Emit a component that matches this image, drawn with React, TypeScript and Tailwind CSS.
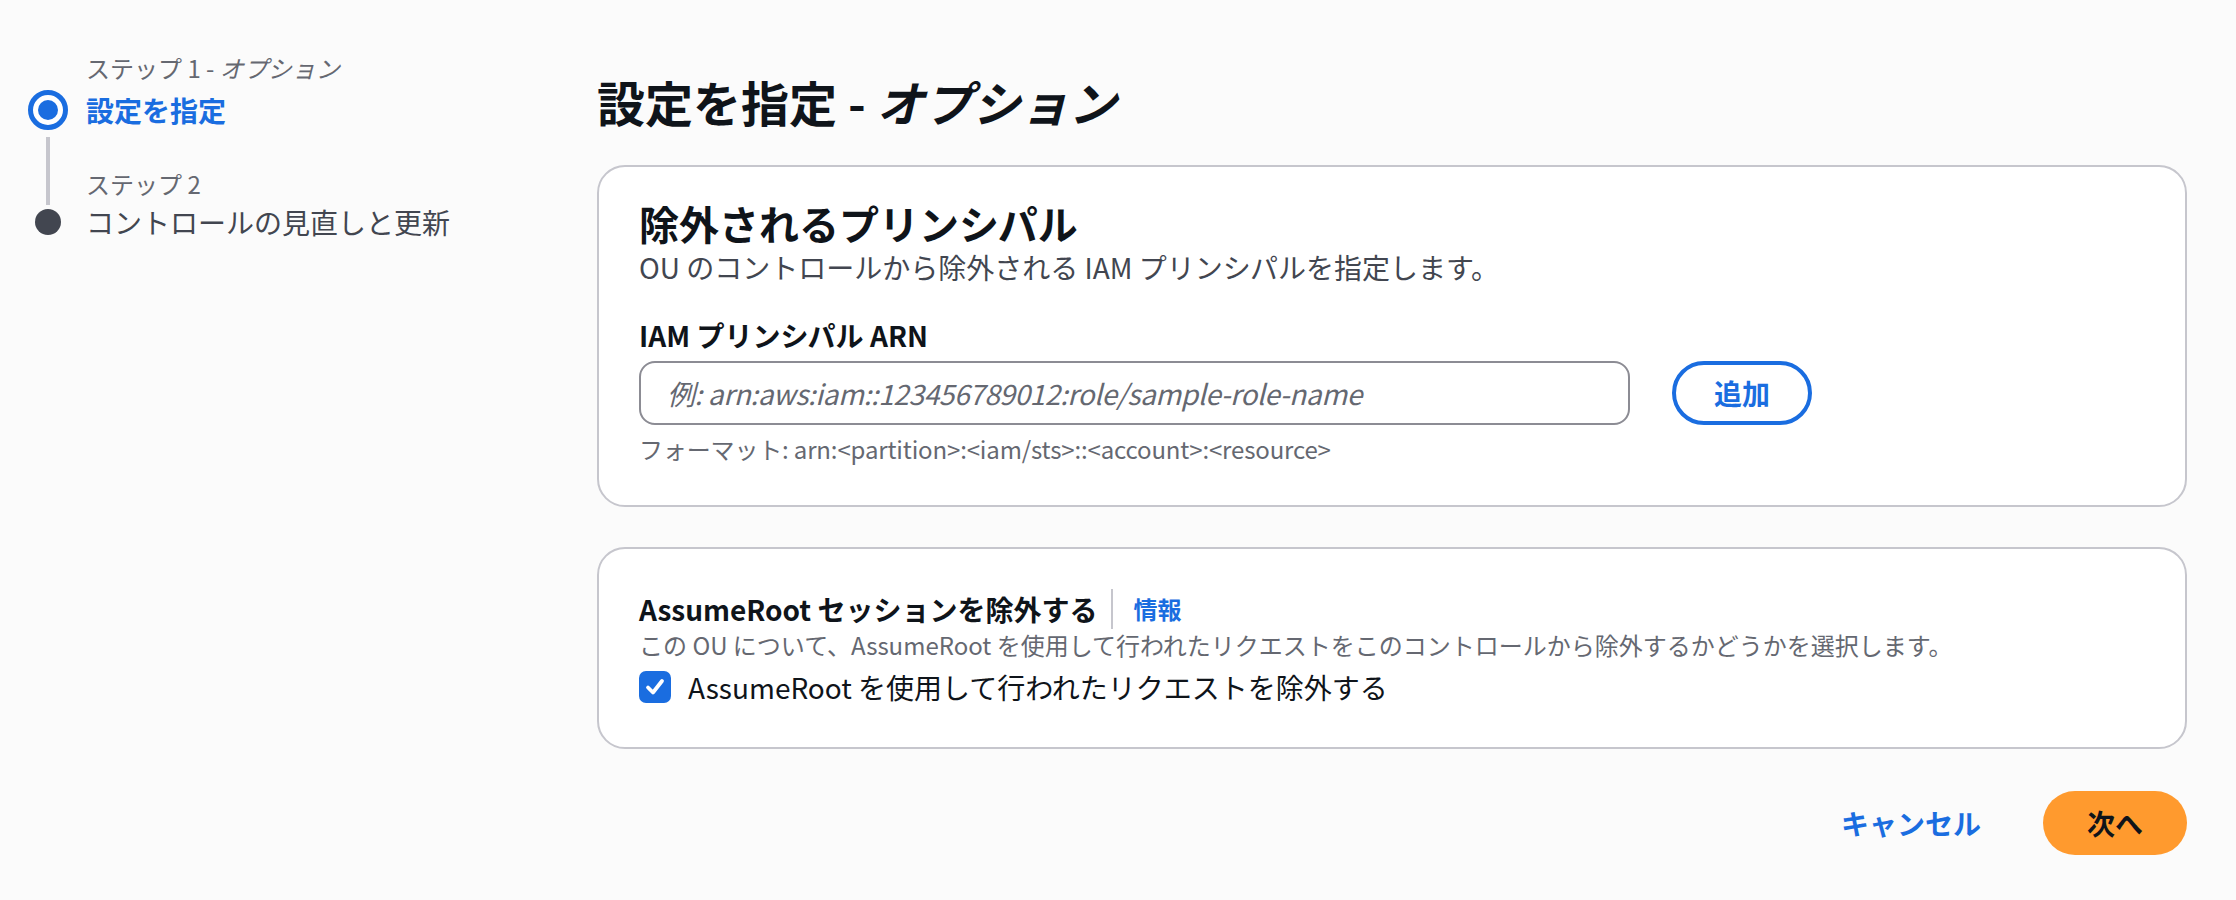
import { useState } from 'react'

const steps = [
  { label: 'ステップ 1 - ', labelItalic: 'オプション', title: '設定を指定' },
  { label: 'ステップ 2', labelItalic: '', title: 'コントロールの見直しと更新' },
]

function StepNav() {
  return (
    <nav className="w-[597px] shrink-0 pl-[28px] pt-[52px]">
      <div className="grid grid-cols-[40px_1fr] gap-x-[18px]">
        <div />
        <div className="text-[24px] leading-8 text-[#656871]">
          {steps[0].label}
          <span className="italic">{steps[0].labelItalic}</span>
        </div>

        <div className="mt-1 flex h-[44px] items-center justify-center">
          <span className="flex h-10 w-10 items-center justify-center rounded-full border-[5px] border-[#1a6de0] bg-white">
            <span className="h-5 w-5 rounded-full bg-[#1a6de0]" />
          </span>
        </div>
        <div className="mt-1 text-[28px] font-bold leading-[44px] text-[#1a6de0]">{steps[0].title}</div>

        <div className="flex justify-center pt-[5px]">
          <span className="h-[calc(100%+5px)] w-1 bg-[#c6c6cd]" />
        </div>
        <div className="pt-[36px] text-[24px] leading-8 text-[#656871]">{steps[1].label}</div>

        <div className="flex h-[44px] items-center justify-center">
          <span className="h-[26px] w-[26px] rounded-full bg-[#424650]" />
        </div>
        <div className="text-[28px] leading-[44px] text-[#424650]">{steps[1].title}</div>
      </div>
    </nav>
  )
}

function Checkbox({ checked, onChange }: { checked: boolean; onChange: () => void }) {
  return (
    <button
      type="button"
      onClick={onChange}
      className={`flex h-8 w-8 shrink-0 items-center justify-center rounded-[7px] ${
        checked ? 'bg-[#1a6de0]' : 'border-2 border-[#8c8c94] bg-white'
      }`}
    >
      {checked && (
        <svg width="22" height="22" viewBox="0 0 22 22" fill="none">
          <path d="M4 11.5 L9 16.5 L18 5" stroke="white" strokeWidth="3.8" strokeLinecap="round" strokeLinejoin="round" />
        </svg>
      )}
    </button>
  )
}

export default function App() {
  const [arn, setArn] = useState('')
  const [excludeRoot, setExcludeRoot] = useState(true)

  return (
    <div className="flex min-h-screen bg-[#fbfbfb] font-['Noto_Sans_CJK_JP',sans-serif] text-[#0f141a]">
      <StepNav />

      <main className="w-[1590px] pt-[71px]">
        <h1 className="text-[48px] font-bold leading-[60px]">
          設定を指定 - <span className="italic">オプション</span>
        </h1>

        <section className="mt-[34px] rounded-[28px] border-2 border-[#c6c6cd] bg-white px-10 pb-10 pt-8">
          <h2 className="text-[40px] font-bold leading-[48px]">除外されるプリンシパル</h2>
          <p className="text-[28px] leading-10 text-[#424650]">
            OU のコントロールから除外される IAM プリンシパルを指定します。
          </p>

          <label className="mt-7 block text-[28px] font-bold leading-10">IAM プリンシパル ARN</label>
          <div className="mt-[6px] flex items-center gap-[42px]">
            <input
              value={arn}
              onChange={e => setArn(e.target.value)}
              placeholder="例: arn:aws:iam::123456789012:role/sample-role-name"
              className="h-16 w-[991px] rounded-2xl border-2 border-[#8c8c94] bg-white px-[26px] text-[28px] tracking-[-0.4px] outline-none placeholder:italic placeholder:text-[#656871]"
            />
            <button className="h-16 rounded-full border-4 border-[#1a6de0] px-[38px] text-[28px] font-bold text-[#1a6de0]">
              追加
            </button>
          </div>
          <p className="mt-2 text-[24px] leading-8 tracking-[-0.15px] text-[#656871]">
            フォーマット: arn:&lt;partition&gt;:&lt;iam/sts&gt;::&lt;account&gt;:&lt;resource&gt;
          </p>
        </section>

        <section className="mt-10 rounded-[28px] border-2 border-[#c6c6cd] bg-white px-10 pb-10 pt-10">
          <div className="flex h-10 items-center">
            <h3 className="text-[28px] font-bold leading-10">AssumeRoot セッションを除外する</h3>
            <span className="ml-[14px] h-10 w-[2px] bg-[#c6c6cd]" />
            <a href="#" className="pl-[20px] text-[24px] font-bold text-[#1a6de0]">
              情報
            </a>
          </div>
          <p className="text-[24px] leading-8 text-[#656871]">
            この OU について、AssumeRoot を使用して行われたリクエストをこのコントロールから除外するかどうかを選択します。
          </p>
          <div className="mt-[6px] flex h-10 items-center">
            <Checkbox checked={excludeRoot} onChange={() => setExcludeRoot(v => !v)} />
            <span className="ml-[17px] text-[28px] leading-10">AssumeRoot を使用して行われたリクエストを除外する</span>
          </div>
        </section>

        <div className="mt-[42px] flex items-center justify-end gap-[22px]">
          <button className="h-16 px-10 text-[28px] font-bold text-[#1a6de0]">キャンセル</button>
          <button className="h-16 w-[144px] rounded-full bg-[#ff9a2e] text-[28px] font-bold text-[#0f141a]">次へ</button>
        </div>
      </main>
    </div>
  )
}
